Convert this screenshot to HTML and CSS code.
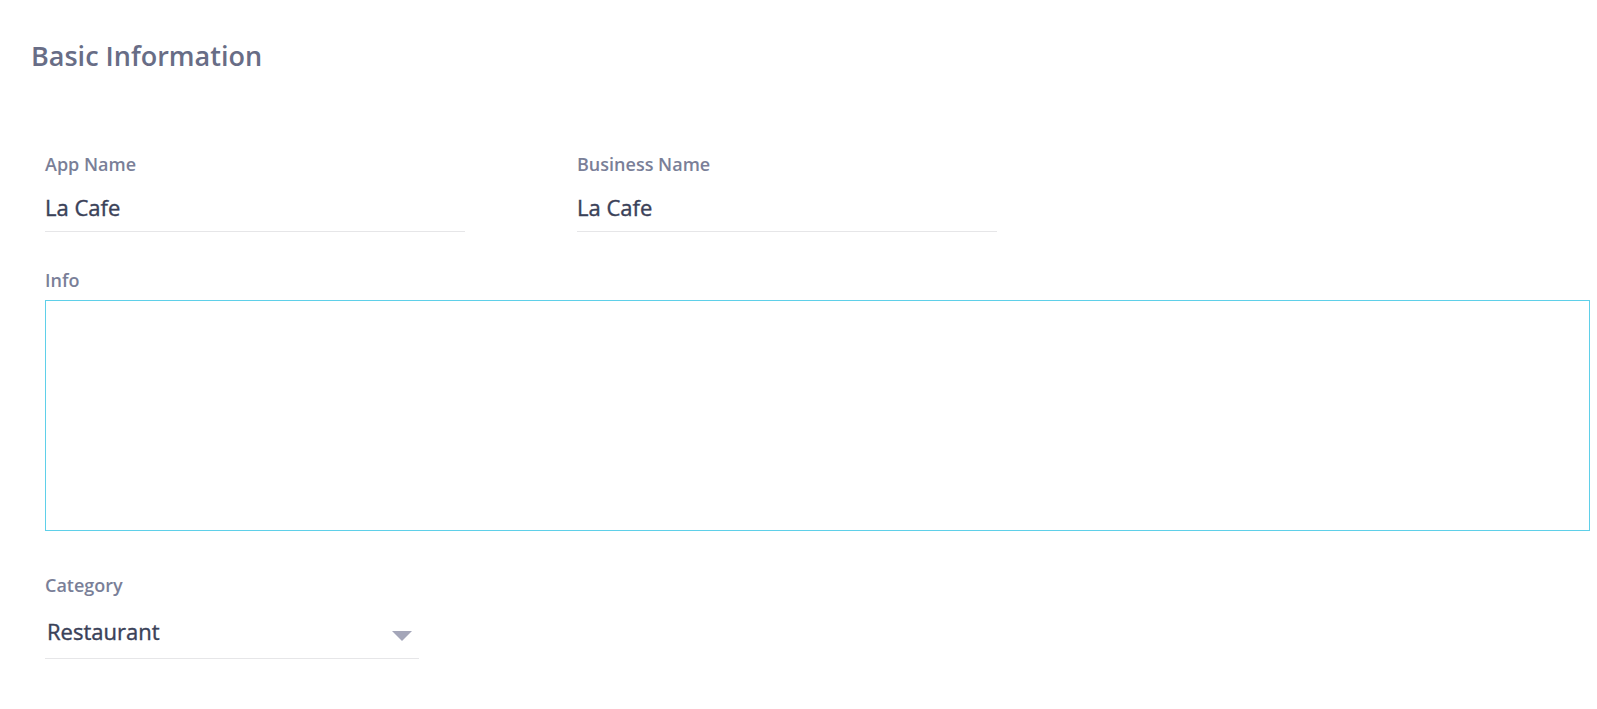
FILE: index.html
```html
<!DOCTYPE html>
<html lang="en">
<head>
<meta charset="utf-8">
<title>Basic Information</title>
<link rel="stylesheet" href="styles.css">
</head>
<body>
<main class="page">
  <h1 class="title">Basic Information</h1>
  <form class="form">
    <div class="row">
      <div class="field">
        <label class="label">App Name</label>
        <div class="input">La Cafe</div>
      </div>
      <div class="field">
        <label class="label">Business Name</label>
        <div class="input">La Cafe</div>
      </div>
    </div>
    <div class="field field-wide">
      <label class="label label-info">Info</label>
      <div class="textarea"></div>
    </div>
    <div class="field field-select">
      <label class="label">Category</label>
      <div class="select">
        <span class="select-value">Restaurant</span>
        <svg class="caret" width="20" height="10" viewBox="0 0 20 10"><path d="M0 0 H20 L10 10 Z" fill="#a4a6b9"/></svg>
      </div>
    </div>
  </form>
</main>
</body>
</html>
```
FILE: styles.css
```css
* { box-sizing: border-box; }
html, body { margin: 0; padding: 0; background: #fff; }
body {
  font-family: "Open Sans", "Noto Sans", sans-serif;
  width: 1597px;
  height: 709px;
  overflow: hidden;
}
.page { padding: 38px 0 0 31px; }
.title {
  margin: 0;
  font-size: 27px;
  line-height: 36px;
  font-weight: 600;
  color: #686d86;
}
.form { padding: 80px 0 0 14px; }
.row { display: flex; gap: 112px; }
.field { display: flex; flex-direction: column; width: 420px; }
.label {
  font-size: 18px;
  line-height: 20px;
  font-weight: 600;
  color: #7a7f98;
}
.input {
  margin-top: 19px;
  font-size: 22px;
  line-height: 28px;
  font-weight: 400;
  color: #3a4158;
  -webkit-text-stroke: 0.4px #3a4158;
  padding-bottom: 10px;
  border-bottom: 1px solid #e6e6e8;
}
.field-wide { width: 1545px; margin-top: 38px; }
.textarea {
  margin-top: 10px;
  height: 231px;
  border: 1px solid #5fd0e9;
}
.field-select { width: 374px; margin-top: 44px; }
.select {
  margin-top: 22px;
  display: flex;
  align-items: center;
  justify-content: space-between;
  padding: 0 7px 13px 2px;
  border-bottom: 1px solid #e6e6e8;
}
.select-value {
  font-size: 22px;
  line-height: 28px;
  font-weight: 400;
  color: #3a4158;
  -webkit-text-stroke: 0.4px #3a4158;
}
.caret { margin-top: 10px; }
```
